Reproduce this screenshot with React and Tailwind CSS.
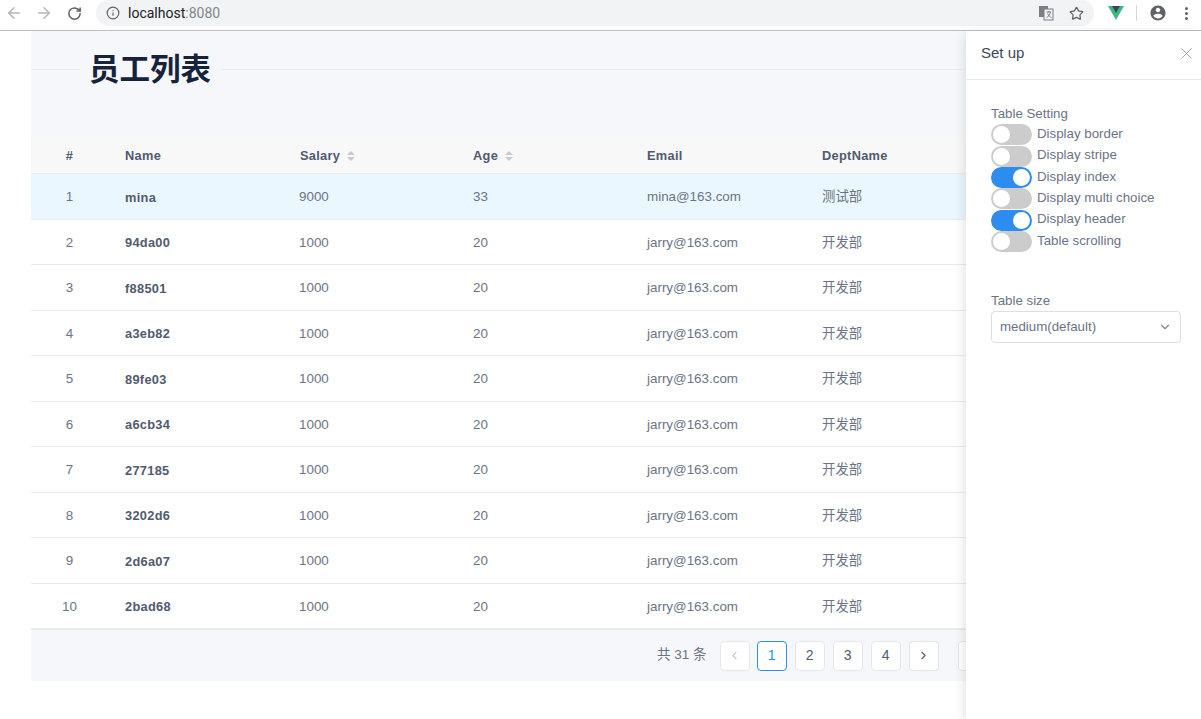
import { ArrowLeft, ArrowRight, RotateCw, Info, Star, X, ChevronDown, ChevronLeft, ChevronRight } from 'lucide-react'

const rows = [
  { id: 1, name: 'mina', salary: 9000, age: 33, email: 'mina@163.com', dept: '测试部' },
  { id: 2, name: '94da00', salary: 1000, age: 20, email: 'jarry@163.com', dept: '开发部' },
  { id: 3, name: 'f88501', salary: 1000, age: 20, email: 'jarry@163.com', dept: '开发部' },
  { id: 4, name: 'a3eb82', salary: 1000, age: 20, email: 'jarry@163.com', dept: '开发部' },
  { id: 5, name: '89fe03', salary: 1000, age: 20, email: 'jarry@163.com', dept: '开发部' },
  { id: 6, name: 'a6cb34', salary: 1000, age: 20, email: 'jarry@163.com', dept: '开发部' },
  { id: 7, name: '277185', salary: 1000, age: 20, email: 'jarry@163.com', dept: '开发部' },
  { id: 8, name: '3202d6', salary: 1000, age: 20, email: 'jarry@163.com', dept: '开发部' },
  { id: 9, name: '2d6a07', salary: 1000, age: 20, email: 'jarry@163.com', dept: '开发部' },
  { id: 10, name: '2bad68', salary: 1000, age: 20, email: 'jarry@163.com', dept: '开发部' },
]

const settings = [
  { label: 'Display border', on: false },
  { label: 'Display stripe', on: false },
  { label: 'Display index', on: true },
  { label: 'Display multi choice', on: false },
  { label: 'Display header', on: true },
  { label: 'Table scrolling', on: false },
]

const SortIcon = () => (
  <svg width="8" height="10" viewBox="0 0 8 10" className="ml-[7px] mt-[1px]">
    <path d="M4 0 L8 4 H0 Z" fill="#c5c8ce" />
    <path d="M4 10 L8 6 H0 Z" fill="#c5c8ce" />
  </svg>
)

const Toggle = ({ on }) => (
  <span
    className={`flex h-[21px] w-[41px] shrink-0 items-center rounded-full border-2 ${
      on ? 'justify-end border-[#2d8cf0] bg-[#2d8cf0]' : 'justify-start border-[#ccc] bg-[#ccc]'
    }`}
  >
    <span className="h-[17px] w-[17px] rounded-full bg-white" />
  </span>
)

const PageButton = ({ children, active }) => (
  <span
    className={`flex h-[30px] w-[30px] shrink-0 items-center justify-center rounded-[4px] border bg-white text-[14px] ${
      active ? '-ml-[1px] border-[#2d8cf0] text-[#2d8cf0]' : 'border-[#e4e6ea] text-[#515a6e]'
    }`}
  >
    {children}
  </span>
)

export default function App() {
  return (
    <div className="relative h-[719px] w-[1201px] overflow-hidden bg-white font-['Liberation_Sans','Noto_Sans_CJK_SC',sans-serif] text-[#515a6e]">
      {/* browser bar */}
      <div className="flex h-[31px] items-start border-b border-[#bdbdbd] bg-white">
        <div className="flex h-[26px] w-[96px] items-center pl-[5px] pr-3">
          <ArrowLeft size={18} className="text-[#b5b5b5]" />
          <ArrowRight size={18} className="ml-[12px] text-[#b5b5b5]" />
          <RotateCw size={15} strokeWidth={2.4} className="ml-[14px] text-[#5f6368]" />
        </div>
        <div className="flex h-[26px] w-[998px] items-center rounded-full bg-[#f1f3f4] pl-[10px] pr-[8px]">
          <Info size={14} className="text-[#5f6368]" />
          <span className="ml-[8px] font-['Roboto'] text-[14px] text-[#202124]">
            localhost<span className="text-[#80868b]">:8080</span>
          </span>
          <svg width="16" height="16" viewBox="0 0 16 16" className="ml-auto mr-[15px]">
            <rect x="1" y="1" width="9" height="11" fill="#7b7f84" />
            <rect x="6" y="4" width="9" height="11" fill="#f1f3f4" stroke="#7b7f84" />
            <path d="M8.5 7 H13 M10.8 6 V7 M12.5 7 C12 10 10 12 8.5 12.5 M9.5 8.5 C10.5 10.5 12 12 13.5 12.5" stroke="#7b7f84" fill="none" />
          </svg>
          <Star size={15} strokeWidth={2} className="mr-[2px] text-[#5f6368]" />
        </div>
        <div className="flex h-[26px] flex-1 items-center pl-[14px]">
          <svg width="16" height="14" viewBox="0 0 16 14">
            <path d="M0 0 H16 L8 14 Z" fill="#41b883" />
            <path d="M4 0 H12 L8 7 Z" fill="#35495e" />
          </svg>
          <span className="ml-[12px] h-[16px] w-px bg-[#d5d5d5]" />
          <svg width="18" height="18" viewBox="0 0 24 24" className="ml-[12px]">
            <path
              fill="#5f6368"
              d="M12 2C6.48 2 2 6.48 2 12s4.48 10 10 10 10-4.48 10-10S17.52 2 12 2zm0 3c1.66 0 3 1.34 3 3s-1.34 3-3 3-3-1.34-3-3 1.34-3 3-3zm0 14.2c-2.5 0-4.71-1.28-6-3.22.03-1.99 4-3.08 6-3.08s5.97 1.09 6 3.08c-1.29 1.94-3.5 3.22-6 3.22z"
            />
          </svg>
          <span className="ml-[18px] flex flex-col gap-[2px]">
            <span className="h-[3px] w-[3px] rounded-full bg-[#5f6368]" />
            <span className="h-[3px] w-[3px] rounded-full bg-[#5f6368]" />
            <span className="h-[3px] w-[3px] rounded-full bg-[#5f6368]" />
          </span>
        </div>
      </div>

      {/* page */}
      <div className="ml-[31px] w-[1170px] overflow-hidden">
        <div className="h-[106px] bg-[#f5f7fa] pt-[18px]">
          <div className="flex h-[40px] items-center">
            <span className="h-px w-[49px] bg-[#e8eaec]" />
            <h1 className="-mt-[1px] pl-[9px] pr-[10px] text-[30.5px] font-bold leading-[40px] text-[#17233d]">员工列表</h1>
            <span className="h-px flex-1 bg-[#e8eaec]" />
          </div>
        </div>

        <div className="flex h-[37px] items-center border-b border-[#e8eaec] bg-[#f8f8f9] pt-[1px] text-[12.8px] font-bold tracking-[0.3px]">
          <div className="w-[77px] text-center">#</div>
          <div className="w-[174px] pl-[17px]">Name</div>
          <div className="flex w-[174px] items-center pl-[18px]">Salary<SortIcon /></div>
          <div className="flex w-[174px] items-center pl-[17px]">Age<SortIcon /></div>
          <div className="w-[175px] pl-[17px]">Email</div>
          <div className="pl-[17px]">DeptName</div>
        </div>

        {rows.map((row) => (
          <div
            key={row.id}
            className={`flex h-[45.5px] items-center border-b border-[#e8eaec] pt-[2px] text-[13.4px] text-[#6b7385] ${
              row.id === 1 ? 'bg-[#ebf7ff]' : 'bg-white'
            }`}
          >
            <div className="w-[77px] text-center">{row.id}</div>
            <div className="w-[174px] pl-[17px] text-[12.8px] font-bold tracking-[0.3px] text-[#515a6e]">{row.name}</div>
            <div className="w-[174px] pl-[17px]">{row.salary}</div>
            <div className="w-[174px] pl-[17px]">{row.age}</div>
            <div className="w-[175px] pl-[17px]">{row.email}</div>
            <div className="pl-[17px]">{row.dept}</div>
          </div>
        ))}

        <div className="flex h-[52px] items-center gap-[8px] border-t border-[#e8eaec] bg-[#f5f7fa] pl-[626px]">
          <span className="mr-[5px] whitespace-nowrap text-[13.5px] text-[#6b7385]">
            共 31 条
          </span>
          <PageButton><ChevronLeft size={13} className="text-[#c5c8ce]" /></PageButton>
          <PageButton active>1</PageButton>
          <PageButton>2</PageButton>
          <PageButton>3</PageButton>
          <PageButton>4</PageButton>
          <PageButton><ChevronRight size={13} /></PageButton>
          <span className="ml-[11px]"><PageButton /></span>
        </div>
      </div>

      {/* settings drawer */}
      <aside className="absolute bottom-0 left-[966px] top-[31px] w-[235px] bg-white shadow-[0_4px_12px_rgba(0,0,0,0.15)]">
        <div className="flex h-[49px] items-center justify-between border-b border-[#e8eaec] pb-[3px] pl-[15px] pr-[5px]">
          <span className="text-[15px] text-[#3b4559]">Set up</span>
          <X size={19} strokeWidth={1.1} className="text-[#999]" />
        </div>
        <div className="px-[25px] pt-[25px] text-[13.3px] text-[#6b7385]">
          <div className="h-[17px] leading-[17px]">Table Setting</div>
          <div className="mt-[2px] flex flex-col">
            {settings.map((item) => (
              <div key={item.label} className="flex h-[21.4px] items-center gap-[5px] whitespace-nowrap">
                <Toggle on={item.on} />
                <span className="-mt-[2px]">{item.label}</span>
              </div>
            ))}
          </div>
          <div className="mt-[40px] h-[17px] leading-[17px]">Table size</div>
          <div className="mt-[2px] flex h-[32px] w-[190px] items-center justify-between rounded-[4px] border border-[#dcdee2] pl-[8px] pr-[8px]">
            <span>medium(default)</span>
            <ChevronDown size={14} className="text-[#808695]" />
          </div>
        </div>
      </aside>
    </div>
  )
}
